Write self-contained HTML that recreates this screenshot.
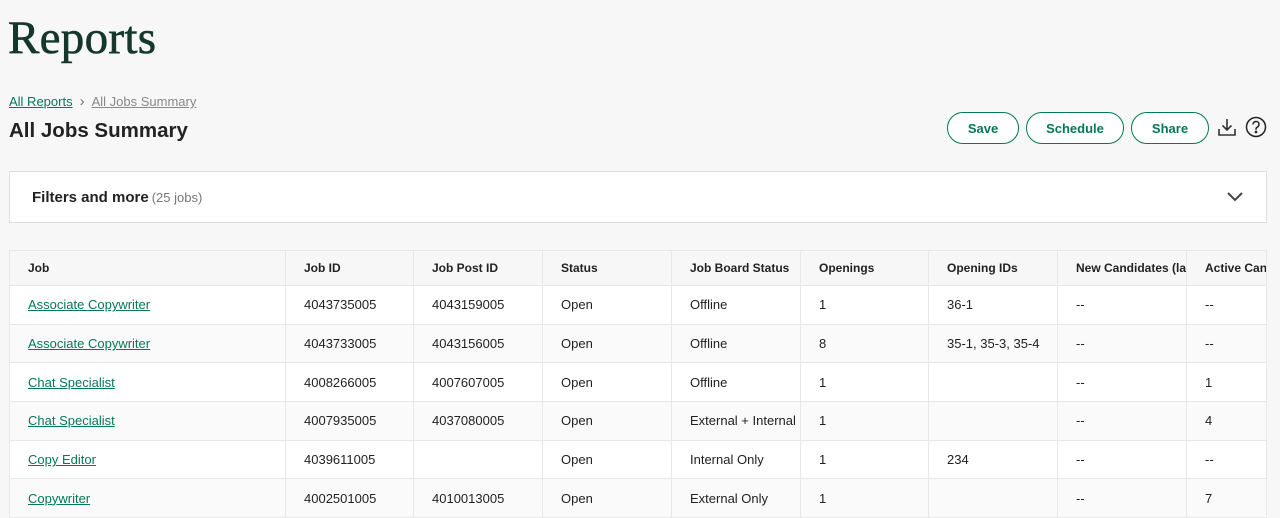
<!DOCTYPE html>
<html><head><meta charset="utf-8"><style>
*{box-sizing:border-box;margin:0;padding:0}
body{width:1280px;height:517px;overflow:hidden;background:#f7f7f7;font-family:"Liberation Sans",sans-serif;color:#222;position:relative}
h1{position:absolute;left:8px;top:11px;font-family:"Liberation Serif",serif;font-weight:400;font-size:47px;color:#15372c;letter-spacing:0.3px;-webkit-text-stroke:0.6px #15372c}
.bc{position:absolute;left:9px;top:93px;font-size:13px}
.bc a{color:#047957;text-decoration:underline}
.bc .s{color:#777;margin:0 7px;font-size:15px}
.bc .c{color:#888;text-decoration:underline}
h2{position:absolute;left:9px;top:119px;font-size:20.5px;font-weight:700;color:#222}
.btn{position:absolute;top:112px;height:32px;border:1px solid #047957;border-radius:16px;background:#fff;color:#047957;font-size:13px;font-weight:700;display:flex;align-items:center;justify-content:center}
.filt{position:absolute;left:9px;top:171px;width:1258px;height:52px;background:#fff;border:1px solid #ddd}
.filt .t{position:absolute;left:22px;top:17px;font-size:15px;font-weight:700;color:#222}
.filt .t span{font-weight:400;color:#777;font-size:13px;margin-left:3px}
table{position:absolute;left:9px;top:250px;border-collapse:collapse;table-layout:fixed;width:1257px;background:#fff;font-size:13px}
td,th{border:1px solid #e8e8e8;padding:0 0 0 18px;white-space:nowrap;overflow:hidden;text-align:left}
th{height:35px;background:#f7f7f7;font-weight:700;font-size:12px}
td{height:38.7px}
tr:nth-child(odd) td{background:#fafafa}
td a{color:#047957;text-decoration:underline}
</style></head><body>
<h1>Reports</h1>
<div class="bc"><a>All Reports</a><span class="s">›</span><span class="c">All Jobs Summary</span></div>
<h2>All Jobs Summary</h2>
<div class="btn" style="left:947px;width:72px">Save</div>
<div class="btn" style="left:1026px;width:98px">Schedule</div>
<div class="btn" style="left:1131px;width:78px">Share</div>
<svg style="position:absolute;left:1217px;top:117px" width="20" height="20" viewBox="0 0 20 20" fill="none" stroke="#333" stroke-width="1.6"><path d="M10 2v11M5.5 8.5L10 13l4.5-4.5M2 12v6h16v-6"/></svg>
<svg style="position:absolute;left:1245px;top:116px" width="22" height="22" viewBox="0 0 22 22" fill="none" stroke="#222" stroke-width="1.5"><circle cx="11" cy="11" r="9.5"/><path d="M8 8.5a3 3 0 1 1 4.2 2.7c-.8.4-1.2 1-1.2 1.8v.8"/><circle cx="11" cy="16" r=".6" fill="#222"/></svg>
<div class="filt"><div class="t">Filters and more<span>(25 jobs)</span></div>
<svg style="position:absolute;right:22px;top:18px" width="18" height="12" viewBox="0 0 18 12" fill="none" stroke="#444" stroke-width="2"><path d="M2 3l7 7 7-7"/></svg></div>
<table>
<colgroup><col style="width:276px"><col style="width:128px"><col style="width:129px"><col style="width:129px"><col style="width:129px"><col style="width:128px"><col style="width:129px"><col style="width:129px"><col style="width:80px"></colgroup>
<tr><th>Job</th><th>Job ID</th><th>Job Post ID</th><th>Status</th><th>Job Board Status</th><th>Openings</th><th>Opening IDs</th><th>New Candidates (last week)</th><th>Active Candidates</th></tr>
<tr><td><a>Associate Copywriter</a></td><td>4043735005</td><td>4043159005</td><td>Open</td><td>Offline</td><td>1</td><td>36-1</td><td>--</td><td>--</td></tr>
<tr><td><a>Associate Copywriter</a></td><td>4043733005</td><td>4043156005</td><td>Open</td><td>Offline</td><td>8</td><td>35-1, 35-3, 35-4</td><td>--</td><td>--</td></tr>
<tr><td><a>Chat Specialist</a></td><td>4008266005</td><td>4007607005</td><td>Open</td><td>Offline</td><td>1</td><td></td><td>--</td><td>1</td></tr>
<tr><td><a>Chat Specialist</a></td><td>4007935005</td><td>4037080005</td><td>Open</td><td>External + Internal</td><td>1</td><td></td><td>--</td><td>4</td></tr>
<tr><td><a>Copy Editor</a></td><td>4039611005</td><td></td><td>Open</td><td>Internal Only</td><td>1</td><td>234</td><td>--</td><td>--</td></tr>
<tr><td><a>Copywriter</a></td><td>4002501005</td><td>4010013005</td><td>Open</td><td>External Only</td><td>1</td><td></td><td>--</td><td>7</td></tr>
</table>
</body></html>
